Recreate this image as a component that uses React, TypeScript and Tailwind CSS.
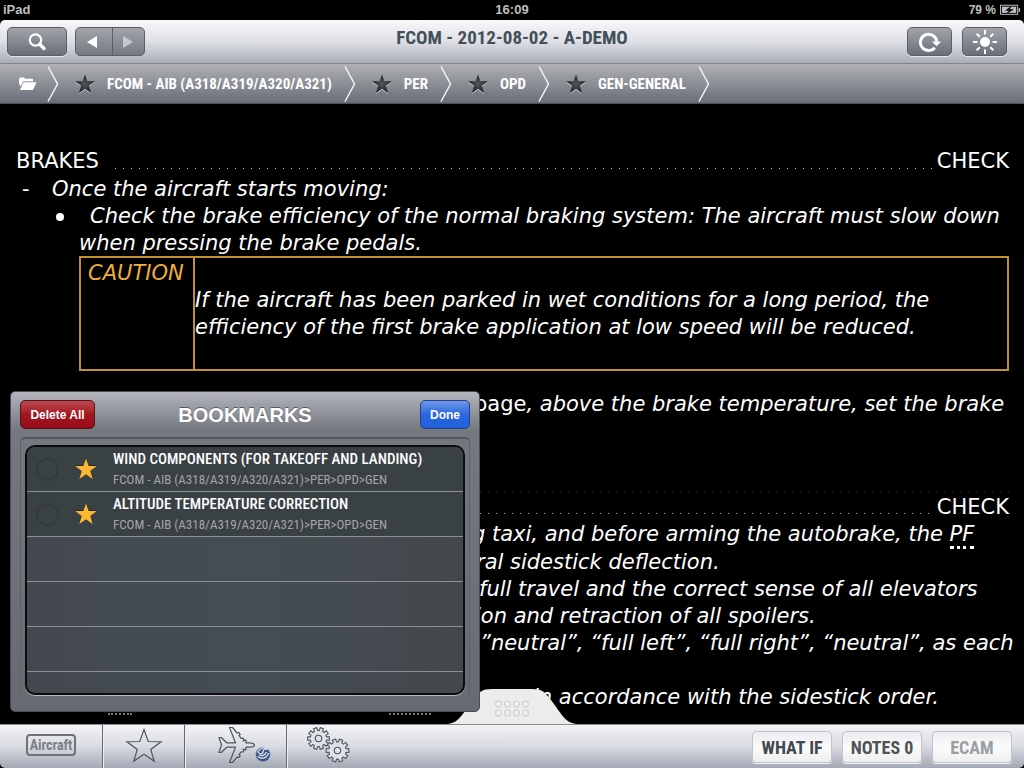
import React from "react";

const narrow = "font-['Liberation_Sans_Narrow','Roboto_Condensed','Open_Sans_Condensed',sans-serif]";

function Star({ className, fill }: { className: string; fill: string }) {
  return (
    <svg viewBox="0 0 24 24" className={className} aria-hidden="true">
      <path d="M12 0.500l2.900 8.100 8.800.2-7 5.300 2.600 8.700-7.300-5.100-7.300 5.100 2.600-8.700-7-5.300 8.800-.2z" fill={fill} />
    </svg>
  );
}

function Chevron() {
  return (
    <svg viewBox="0 0 12 36" className="h-9 w-3 shrink-0" aria-hidden="true">
      <path d="M1 0.500L10.500 18L1 35.500" fill="none" stroke="#f4f4f6" strokeWidth="1.500" />
    </svg>
  );
}

function Crumb({ label }: { label: string }) {
  return (
    <>
      <a href="#" className="mr-3 ml-4 flex items-center gap-3 whitespace-nowrap">
        <Star className="h-5 w-5 drop-shadow-[0_1px_0_#c4c6ca]" fill="url(#crumbStar)" />
        <span className="pt-0.5">{label}</span>
      </a>
      <Chevron />
    </>
  );
}

const toolButton =
  "flex h-[29px] items-center justify-center rounded-[5px] border border-[#5c5f68] bg-linear-to-b from-[#a2a4aa] to-[#6a6f79] shadow-[0_1px_0_#e6e6ec]";

function StatusBar() {
  return (
    <div className="grid h-5 grid-cols-3 items-center bg-black px-[3px] text-[13px] leading-5 font-bold text-[#bfbfbf]">
      <span>iPad</span>
      <span className="text-center">16:09</span>
      <span className="flex items-center justify-end gap-1 text-xs">
        79 %
        <svg viewBox="0 0 22 12" className="h-3 w-[21px]" aria-hidden="true">
          <rect x="0.500" y="1" width="18" height="9.500" fill="none" stroke="#bfbfbf" />
          <rect x="2" y="2.500" width="15" height="6.500" fill="#bfbfbf" />
          <rect x="19.500" y="4" width="1.500" height="4" fill="#bfbfbf" />
          <path d="M11.500 2L6 6.500h3.500L7.500 9.500 14 5.500h-4z" fill="#000" stroke="#000" strokeWidth="0.500" />
        </svg>
      </span>
    </div>
  );
}

function Toolbar() {
  return (
    <header className="grid h-[43px] grid-cols-[1fr_auto_1fr] rounded-t-[5px] bg-linear-to-b from-[#f8f8fa] via-[#dfe0e6] to-[#a9adb9] px-[7px] pt-[7px]">
      <div className="flex gap-2">
        <button aria-label="Search" className={`${toolButton} w-[60px]`}>
          <svg viewBox="0 0 18 18" className="h-[18px] w-[18px]" aria-hidden="true">
            <circle cx="7.500" cy="7" r="5.700" fill="none" stroke="#fff" strokeWidth="2.200" />
            <path d="M12 11.500l4 4" stroke="#fff" strokeWidth="3.400" strokeLinecap="round" />
          </svg>
        </button>
        <div className="flex h-[29px] w-[70px] overflow-hidden rounded-[5px] border border-[#5c5f68] bg-linear-to-b from-[#a2a4aa] to-[#757a83]">
          <button aria-label="Back" className="flex flex-1 items-center justify-center border-r border-[#5c5f68] pr-1">
            <svg viewBox="0 0 10 12" className="h-3 w-2.5" aria-hidden="true"><path d="M10 0v12L0 6z" fill="#fff" /></svg>
          </button>
          <button aria-label="Forward" disabled className="flex flex-1 items-center justify-center">
            <svg viewBox="0 0 10 12" className="h-3 w-2.5" aria-hidden="true"><path d="M0 0v12l10-6z" fill="#c6c8cc" /></svg>
          </button>
        </div>
      </div>
      <h1 className={`${narrow} text-[19px] leading-[22px] font-bold text-[#43505a]`}>FCOM - 2012-08-02 - A-DEMO</h1>
      <div className="mr-2.5 flex justify-end gap-2.5">
        <button aria-label="Refresh" className={`${toolButton} w-[45px]`}>
          <svg viewBox="0 0 24 22" className="h-[22px] w-6" aria-hidden="true">
            <path d="M16.800 16.800A8.200 8.200 0 1 1 18.800 10.500" fill="none" stroke="#fff" strokeWidth="3" />
            <path d="M14 10.500h9L18.600 15.200z" fill="#fff" />
          </svg>
        </button>
        <button aria-label="Brightness" className={`${toolButton} w-[45px]`}>
          <svg viewBox="0 0 24 24" className="h-6 w-6" aria-hidden="true">
            <circle cx="12" cy="12" r="5" fill="#fff" />
            <path d="M12 0v4.500M12 19.500V24M0 12h4.500M19.500 12H24M3.700 3.700L6.800 6.800M17.200 17.200l3.100 3.100M3.700 20.300l3.100-3.100M17.200 6.800l3.100-3.100" stroke="#fff" strokeWidth="2" />
          </svg>
        </button>
      </div>
    </header>
  );
}

function Breadcrumbs() {
  return (
    <nav className={`${narrow} flex h-[41px] items-center border-t border-b border-t-[#80838e] border-b-[#4b4f55] bg-linear-to-b from-[#b0b1b4] to-[#686e77] pl-[18px] text-[15px] font-bold text-white`}>
      <svg className="absolute h-0 w-0" aria-hidden="true">
        <defs>
          <radialGradient id="crumbStar">
            <stop offset="0" stopColor="#55575c" />
            <stop offset="1" stopColor="#1c1d20" />
          </radialGradient>
        </defs>
      </svg>
      <a href="#" aria-label="Library" className="mr-2.5">
        <svg viewBox="0 0 19 14" className="h-3.5 w-[19px]" aria-hidden="true">
          <path d="M1 2l1.200-1.500h4l1 1.300H14c.7 0 1 .4 1 1v1.400H5.200L2.500 9.500 1 6z" fill="#fff" />
          <path d="M5.500 5.200H18.500L15 13H2z" fill="#fff" />
        </svg>
      </a>
      <Chevron />
      <Crumb label="FCOM - AIB (A318/A319/A320/A321)" />
      <Crumb label="PER" />
      <Crumb label="OPD" />
      <Crumb label="GEN-GENERAL" />
    </nav>
  );
}

function Dots({ className }: { className: string }) {
  return (
    <span
      className={`h-px flex-1 bg-[linear-gradient(to_right,currentColor_1px,transparent_1px)] bg-[length:8px_1px] bg-repeat-x ${className}`}
    />
  );
}

function Manual() {
  return (
    <main className="flex-1 overflow-hidden bg-black pt-11 pr-[15px] pb-1 pl-4 font-['DejaVu_Sans','Verdana',sans-serif] text-[21px] leading-[27px] text-white">
      <div className="flex">
        <span>BRAKES</span>
        <Dots className="mt-5 mr-1 ml-4 text-[#b4b4b4]" />
        <span>CHECK</span>
      </div>
      <ul className="italic">
        <li className="flex h-7 items-center pl-1.5">
          <span className="w-[30px] not-italic">-</span>
          <span>Once the aircraft starts moving:</span>
        </li>
        <li className="relative pl-[63px] before:absolute before:top-2.5 before:left-10 before:h-2 before:w-2 before:rounded-full before:bg-white">
          <p className="indent-[11px]">Check the brake efficiency of the normal braking system: The aircraft must slow down when pressing the brake pedals.</p>
        </li>
      </ul>
      <table className="-mt-px ml-[63px] h-[115px] w-[calc(100%-63px)] border-collapse italic">
        <tbody>
          <tr>
            <th className="w-[114px] border-2 border-[#c4902f] px-[7px] pt-0.5 text-left align-top font-normal text-[#f0ae3c]">CAUTION</th>
            <td className="border-2 border-[#c4902f]">If the aircraft has been parked in wet conditions for a long period, the efficiency of the first brake application at low speed will be reduced.</td>
          </tr>
        </tbody>
      </table>
      <p className="mt-5 pl-[458px] whitespace-nowrap italic"><span className="not-italic">page</span>, above the brake temperature, set the brake</p>
      <div className="mt-[73px] flex"><Dots className="text-[#3a3a3a]" /></div>
      <div className="mt-0.5 flex">
        <Dots className="mt-[19px] mr-1 text-[#b4b4b4]" />
        <span>CHECK</span>
      </div>
      <div className="italic">
        <p className="mb-px pl-[456px] whitespace-nowrap">g taxi, and before arming the autobrake, the <abbr className="border-b-3 border-dotted border-white no-underline">PF</abbr></p>
        <p className="pl-[460px]">ral sidestick deflection.</p>
        <p className="pl-[463px] whitespace-nowrap">full travel and the correct sense of all elevators</p>
        <p className="pl-[459px]">ion and retraction of all spoilers.</p>
        <p className="pl-[464px] whitespace-nowrap">”neutral”, “full left”, “full right”, “neutral”, as each</p>
        <p className="mt-[27px] pl-[517px] whitespace-nowrap">in accordance with the sidestick order.</p>
      </div>
      <div className="mt-0.5 flex gap-[257px] pl-[92px]">
        <span className="w-6 border-b-2 border-dotted border-[#777777]" />
        <span className="w-[42px] border-b-2 border-dotted border-[#777777]" />
      </div>
    </main>
  );
}

function PanelRow({ title, path }: { title: string; path: string }) {
  return (
    <li className="flex h-[45px] items-center border-b border-[#8d9295] bg-[#3a4145] pl-[9px]">
      <input type="checkbox" aria-label={title} className="h-[23px] w-[23px] shrink-0 appearance-none rounded-full border-2 border-[#33393d]" />
      <Star className="ml-4 h-[22px] w-[22px] shrink-0 drop-shadow-[0_-1px_0_#202428]" fill="#fdb833" />
      <div className={`${narrow} ml-4 whitespace-nowrap`}>
        <div className="text-[15px] leading-[22px] font-medium text-white">{title}</div>
        <div className="text-[13px] leading-5 text-[#a4a6a7]">{path}</div>
      </div>
    </li>
  );
}

function Bookmarks() {
  return (
    <section className="absolute bottom-14 left-2.5 z-20 w-[470px] rounded-[5px] border border-[#4a4d53] bg-linear-to-b from-[#b4b5bc] via-[#74787f] via-12% to-[#676a71] px-[9px] pb-4">
      <div className="grid h-[45px] grid-cols-[1fr_auto_1fr] items-center">
        <button className="h-[29px] w-[75px] rounded-[5px] border border-[#54161c] bg-linear-to-b from-[#bd4850] via-[#a3151f] to-[#970c18] text-xs font-bold text-white">Delete All</button>
        <h2 className="text-xl font-bold text-white [text-shadow:0_-1px_0_#55585e]">BOOKMARKS</h2>
        <button className="h-[29px] w-[50px] justify-self-end rounded-[5px] border border-[#27408a] bg-linear-to-b from-[#6f97e8] via-[#2a66df] to-[#205fdc] text-xs font-bold text-white">Done</button>
      </div>
      <div className="rounded-t-[5px] border-x border-t-2 border-[#5d6168] border-t-[#50545a] px-1 pt-1.5">
        <ul className="h-[250px] overflow-hidden rounded-[10px] border-2 border-[#0c0d0e] bg-linear-to-r from-[#43494e] via-[#454d54] to-[#43484c] shadow-[0_1px_0_#b9bbbf]">
          <PanelRow title="WIND COMPONENTS (FOR TAKEOFF AND LANDING)" path="FCOM - AIB (A318/A319/A320/A321)>PER>OPD>GEN" />
          <PanelRow title="ALTITUDE TEMPERATURE CORRECTION" path="FCOM - AIB (A318/A319/A320/A321)>PER>OPD>GEN" />
          <li className="h-[45px] border-b border-[#8d9295]" />
          <li className="h-[45px] border-b border-[#8d9295]" />
          <li className="h-[45px] border-b border-[#8d9295]" />
        </ul>
      </div>
    </section>
  );
}

function PullTab() {
  return (
    <button aria-label="Open drawer" className="absolute bottom-11 left-1/2 z-10 -translate-x-1/2">
      <svg viewBox="0 0 128 36" className="h-9 w-32" aria-hidden="true">
        <path d="M0 36C12 34 14 26 25 12C31 4 34 1 44 1H84C94 1 97 4 103 12C114 26 116 34 128 36z" fill="#ececec" />
        {[50.500, 59.500, 68.500, 77.500].map((x) => (
          <g key={x} fill="#f2f2f2" stroke="#d0d0d3" strokeWidth="1.200">
            <circle cx={x} cy="16" r="2.800" />
            <circle cx={x} cy="25" r="2.800" />
          </g>
        ))}
      </svg>
    </button>
  );
}

function Gear({ cx, cy, r }: { cx: number; cy: number; r: number }) {
  const teeth = 10;
  const pts: string[] = [];
  for (let i = 0; i < teeth; i++) {
    const a = (i / teeth) * Math.PI * 2;
    const corners: [number, number][] = [[-0.2, r - 2.8], [-0.16, r], [0.16, r], [0.2, r - 2.8]];
    corners.forEach(([da, rr]) => pts.push(`${(cx + Math.cos(a + da) * rr).toFixed(2)},${(cy + Math.sin(a + da) * rr).toFixed(2)}`));
  }
  return (
    <g fill="#dfe1e8" stroke="#4d555d" strokeWidth="1.100" strokeLinejoin="round">
      <polygon points={pts.join(" ")} />
      <circle cx={cx} cy={cy} r="3.200" />
    </g>
  );
}

const cell = "flex items-center justify-center border-r border-[#666a73] pb-1 shadow-[1px_0_0_#eeeef2]";
const plate = "h-8 w-20 rounded-[4px] border border-[#c2c3c9] bg-linear-to-b from-[#ececee] via-[#fbfbfc] to-[#eeeeef] shadow-[0_1px_0_#f4f4f6]";

function BottomBar() {
  return (
    <footer className="flex h-11 rounded-b-[5px] border-t border-[#8a8c92] bg-linear-to-b from-[#f3f3f7] via-[#d9dbe2] to-[#a5a9b5]">
      <button className={`${cell} w-[103px]`}>
        <span className={`${narrow} h-[22px] w-[50px] rounded-[4px] border-2 border-[#6f747a] text-sm leading-[18px] font-bold text-[#7b8086]`}>Aircraft</span>
      </button>
      <button aria-label="Bookmarks" className={`${cell} w-[82px]`}>
        <svg viewBox="0 0 38 36" className="h-9 w-[38px]" aria-hidden="true">
          <path d="M19 2.500l4.200 12 12.800.2-10.300 7.800 3.600 11.700L19 27.300 8.700 34.200l3.600-11.700L2 14.700l12.800-.2z" fill="none" stroke="#4d555d" strokeWidth="1.200" />
        </svg>
      </button>
      <button aria-label="Flight" className={`${cell} w-[102px]`}>
        <svg viewBox="0 0 56 40" className="ml-4 h-10 w-14" aria-hidden="true">
          <path d="M3 12.500h2.200l5.500 5.300h8.800L13.500 2.500h3L21 8l2-.3 1.200 1.800-1.200 1 2.200 2.800 1.800-.2 1 1.600-1 1.200 3-.9v2.800h4c2.500.3 4.500 1 4.500 2.200s-2 2-4.500 2.200h-4V25l-3-.9 1 1.300-1 1.600-1.800-.2-2.200 2.800 1.200 1-1.200 1.800-2-.3L16.500 37.500h-3l6-15.300h-8.800L5.200 27.500H3L5.500 20z" fill="none" stroke="#4d555d" strokeWidth="1.200" strokeLinejoin="round" />
          <circle cx="47" cy="29.500" r="7.300" fill="#3c5588" stroke="#a9b4c9" strokeWidth="0.600" />
          <path d="M42 27c2-4 6-5 10-3-4-.5-5 1-5 3s-3 3-5 0zM43.500 30c4 2 6-1 7-3M45 33c4 1 7-2 7.500-5M42 31c1 2 2 2 3 2" fill="none" stroke="#e3e8f2" strokeWidth="1.300" />
        </svg>
      </button>
      <button aria-label="Settings" className="flex w-[82px] items-center justify-center pb-1">
        <svg viewBox="0 0 44 38" className="h-[38px] w-11" aria-hidden="true">
          <Gear cx={12.500} cy={12.500} r={11} />
          <Gear cx={31.500} cy={24.500} r={11.500} />
        </svg>
      </button>
      <div className={`${narrow} ml-auto flex gap-2.5 pt-1.5 pr-3 text-[18px] font-bold`}>
        <button className={`${plate} text-[#404a53]`}>WHAT IF</button>
        <button className={`${plate} text-[#505357]`}>NOTES 0</button>
        <button disabled className={`${plate} text-[#9b9fa4]`}>ECAM</button>
      </div>
    </footer>
  );
}

export default function App() {
  return (
    <div className="relative flex min-h-screen flex-col bg-black font-['Liberation_Sans',Arial,sans-serif]">
      <StatusBar />
      <Toolbar />
      <Breadcrumbs />
      <Manual />
      <Bookmarks />
      <PullTab />
      <BottomBar />
    </div>
  );
}
